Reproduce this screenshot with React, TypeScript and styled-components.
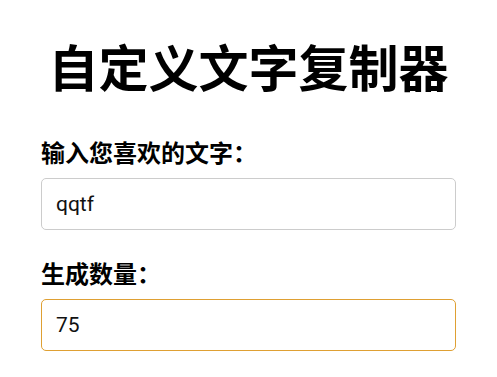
import React from "react";
import styled, { createGlobalStyle } from "styled-components";

const Global = createGlobalStyle`
  html, body { margin: 0; padding: 0; background: #fff; }
  body { font-family: "Noto Sans CJK SC", "Noto Sans", sans-serif; color: #000; }
`;

const Page = styled.div`
  padding: 36px 41px 0 41px;
  display: flex;
  flex-direction: column;
`;

const Title = styled.h1`
  margin: 0 0 43px 0;
  font-size: 50px;
  line-height: 58px;
  font-weight: 700;
  text-align: center;
  font-family: "Noto Sans CJK SC", sans-serif;
`;

const Field = styled.div`
  display: flex;
  flex-direction: column;
  gap: 12px;
  margin-bottom: 28px;
`;

const Label = styled.label`
  font-size: 24px;
  line-height: 29px;
  font-weight: 700;
  font-family: "Noto Sans CJK SC", sans-serif;
`;

const Input = styled.input<{ $focused?: boolean }>`
  box-sizing: border-box;
  width: 100%;
  height: 52px;
  padding: 0 14px;
  font-family: Roboto, "Noto Sans", sans-serif;
  font-size: 21px;
  color: #111;
  border: 1px solid ${(p) => (p.$focused ? "#dfa033" : "#cccccc")};
  border-radius: 5px;
  outline: none;
  background: #fff;
`;

export default function App() {
  return (
    <>
      <Global />
      <Page>
        <Title>自定义文字复制器</Title>
        <Field>
          <Label htmlFor="txt">输入您喜欢的文字：</Label>
          <Input id="txt" type="text" defaultValue="qqtf" />
        </Field>
        <Field>
          <Label htmlFor="cnt">生成数量：</Label>
          <Input id="cnt" type="text" defaultValue="75" $focused />
        </Field>
      </Page>
    </>
  );
}
